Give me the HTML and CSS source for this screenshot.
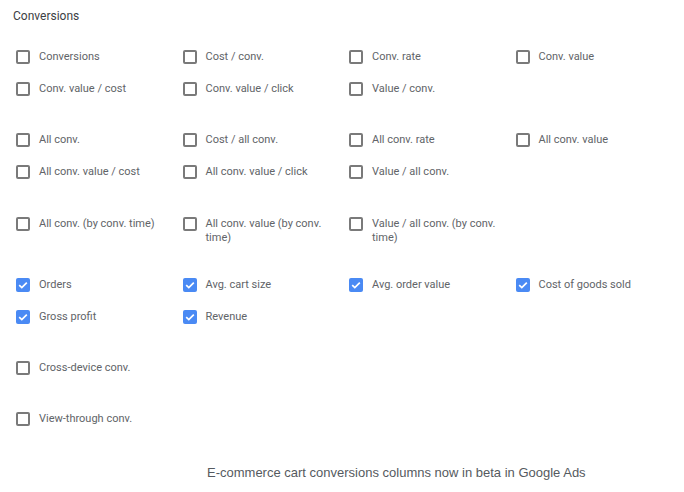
FILE: index.html
```html
<!DOCTYPE html>
<html>
<head>
<meta charset="utf-8">
<link rel="stylesheet" href="styles.css">
</head>
<body>
<div class="panel">
  <div class="title">Conversions</div>
  <div class="group g1">
    <label class="item"><span class="box"></span><span class="text">Conversions</span></label>
    <label class="item"><span class="box"></span><span class="text">Cost / conv.</span></label>
    <label class="item"><span class="box"></span><span class="text">Conv. rate</span></label>
    <label class="item"><span class="box"></span><span class="text">Conv. value</span></label>
    <label class="item"><span class="box"></span><span class="text">Conv. value / cost</span></label>
    <label class="item"><span class="box"></span><span class="text">Conv. value / click</span></label>
    <label class="item"><span class="box"></span><span class="text">Value / conv.</span></label>
  </div>
  <div class="group g2">
    <label class="item"><span class="box"></span><span class="text">All conv.</span></label>
    <label class="item"><span class="box"></span><span class="text">Cost / all conv.</span></label>
    <label class="item"><span class="box"></span><span class="text">All conv. rate</span></label>
    <label class="item"><span class="box"></span><span class="text">All conv. value</span></label>
    <label class="item"><span class="box"></span><span class="text">All conv. value / cost</span></label>
    <label class="item"><span class="box"></span><span class="text">All conv. value / click</span></label>
    <label class="item"><span class="box"></span><span class="text">Value / all conv.</span></label>
  </div>
  <div class="group g3">
    <label class="item"><span class="box"></span><span class="text">All conv. (by conv. time)</span></label>
    <label class="item"><span class="box"></span><span class="text">All conv. value (by conv. time)</span></label>
    <label class="item"><span class="box"></span><span class="text">Value / all conv. (by conv. time)</span></label>
  </div>
  <div class="group g4">
    <label class="item"><span class="box checked"><svg viewBox="0 0 14 14"><path d="M3.2 7.2 L5.8 9.6 L10.8 4.6" fill="none" stroke="#fff" stroke-width="1.7"/></svg></span><span class="text">Orders</span></label>
    <label class="item"><span class="box checked"><svg viewBox="0 0 14 14"><path d="M3.2 7.2 L5.8 9.6 L10.8 4.6" fill="none" stroke="#fff" stroke-width="1.7"/></svg></span><span class="text">Avg. cart size</span></label>
    <label class="item"><span class="box checked"><svg viewBox="0 0 14 14"><path d="M3.2 7.2 L5.8 9.6 L10.8 4.6" fill="none" stroke="#fff" stroke-width="1.7"/></svg></span><span class="text">Avg. order value</span></label>
    <label class="item"><span class="box checked"><svg viewBox="0 0 14 14"><path d="M3.2 7.2 L5.8 9.6 L10.8 4.6" fill="none" stroke="#fff" stroke-width="1.7"/></svg></span><span class="text">Cost of goods sold</span></label>
    <label class="item"><span class="box checked"><svg viewBox="0 0 14 14"><path d="M3.2 7.2 L5.8 9.6 L10.8 4.6" fill="none" stroke="#fff" stroke-width="1.7"/></svg></span><span class="text">Gross profit</span></label>
    <label class="item"><span class="box checked"><svg viewBox="0 0 14 14"><path d="M3.2 7.2 L5.8 9.6 L10.8 4.6" fill="none" stroke="#fff" stroke-width="1.7"/></svg></span><span class="text">Revenue</span></label>
  </div>
  <div class="group g5">
    <label class="item"><span class="box"></span><span class="text">Cross-device conv.</span></label>
  </div>
  <div class="group g6">
    <label class="item"><span class="box"></span><span class="text">View-through conv.</span></label>
  </div>
  <div class="caption">E-commerce cart conversions columns now in beta in Google Ads</div>
</div>
</body>
</html>
```
FILE: styles.css
```css
html, body {
  margin: 0;
  padding: 0;
  background: #ffffff;
}
.panel {
  width: 684px;
  height: 492px;
  box-sizing: border-box;
  padding: 8px 0 0 16px;
  font-family: Roboto, "Liberation Sans", sans-serif;
}
.title {
  margin-left: -3px;
  font-size: 12px;
  line-height: 16px;
  color: #3c4043;
  height: 17px;
  margin-bottom: 16px;
}
.group {
  display: grid;
  grid-template-columns: repeat(4, 166.5px);
}
.g2 { margin-top: 19px; }
.g3 { margin-top: 20px; }
.g4 { margin-top: 15px; }
.g5 { margin-top: 19px; }
.g6 { margin-top: 19px; }
.item {
  display: flex;
  align-items: flex-start;
  gap: 9px;
  padding: 9px 0;
}
.box {
  flex: none;
  width: 14px;
  height: 14px;
  box-sizing: border-box;
  border: 2px solid #7a7a7a;
  border-radius: 2px;
}
.box.checked {
  border: none;
  background: #4a8af4;
}
.box svg {
  display: block;
  width: 14px;
  height: 14px;
}
.text {
  font-size: 11px;
  line-height: 14px;
  color: #616468;
  max-width: 135px;
}
.caption {
  margin-top: 30px;
  padding-left: 191px;
  font-family: "Liberation Sans", Arial, sans-serif;
  font-size: 13px;
  line-height: 16px;
  color: #555a60;
}
```
